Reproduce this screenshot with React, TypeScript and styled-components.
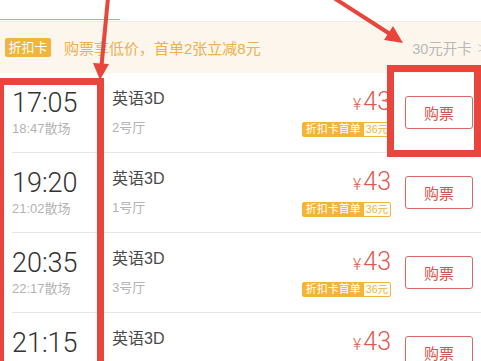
import React from "react";
import styled, { createGlobalStyle } from "styled-components";

interface Show {
  start: string;
  end: string;
  hall: string;
}

const shows: Show[] = [
  { start: "17:05", end: "18:47", hall: "2号厅" },
  { start: "19:20", end: "21:02", hall: "1号厅" },
  { start: "20:35", end: "22:17", hall: "3号厅" },
  { start: "21:15", end: "22:57", hall: "2号厅" },
];

const RED = "#e8453c";
const LIGHT_FONT = `Roboto, "Liberation Sans", "Noto Sans CJK SC", sans-serif`;

const App: React.FC = () => {
  return (
    <>
      <GlobalStyle />
      <StyledPage>
        <StyledTabBar>
          <StyledTabLine />
        </StyledTabBar>
        <StyledBanner>
          <StyledBannerLeft>
            <StyledCardTag>折扣卡</StyledCardTag>
            <StyledBannerText>购票享低价，首单2张立减8元</StyledBannerText>
          </StyledBannerLeft>
          <StyledOpenCard>
            30元开卡<StyledChevron>&gt;</StyledChevron>
          </StyledOpenCard>
        </StyledBanner>
        <StyledList>
          {shows.map((show) => (
            <StyledRow key={show.start}>
              <StyledTimeCol>
                <StyledStart>{show.start}</StyledStart>
                <StyledEnd>{show.end}散场</StyledEnd>
              </StyledTimeCol>
              <StyledInfo>
                <StyledTitle>英语3D</StyledTitle>
                <StyledHall>{show.hall}</StyledHall>
              </StyledInfo>
              <StyledPriceCol>
                <StyledPrice>
                  <StyledYen>¥</StyledYen>43
                </StyledPrice>
                <StyledDeal>
                  <StyledDealLabel>折扣卡首单</StyledDealLabel>
                  <StyledDealPrice>36元</StyledDealPrice>
                </StyledDeal>
              </StyledPriceCol>
              <StyledBuyButton>购票</StyledBuyButton>
            </StyledRow>
          ))}
        </StyledList>

        {/* annotation marks drawn over the screenshot */}
        <StyledMarkBox $left={-3} $top={78} $width={107} $height={300} />
        <StyledMarkBox $left={387} $top={65} $width={94} $height={92} />
        <StyledArrows width="481" height="361" viewBox="0 0 481 361">
          <line x1="108" y1="-2" x2="101.5" y2="66" stroke={RED} strokeWidth="4" />
          <polygon points="100,80 93,63 109,64" fill={RED} />
          <line x1="334" y1="-2" x2="390" y2="34" stroke={RED} strokeWidth="4" />
          <polygon points="403,43 384,40 393,26" fill={RED} />
        </StyledArrows>
      </StyledPage>
    </>
  );
};

export default App;

const GlobalStyle = createGlobalStyle`
  body {
    margin: 0;
    background: #ffffff;
    font-family: "Liberation Sans", "Noto Sans CJK SC", sans-serif;
    overflow: hidden;
  }
`;

const StyledPage = styled.div`
  position: relative;
  width: 481px;
  height: 361px;
  overflow: hidden;
  background: #ffffff;
`;

const StyledTabBar = styled.div`
  height: 21px;
  display: flex;
  align-items: flex-end;
  padding-bottom: 1px;
  box-sizing: border-box;
`;

const StyledTabLine = styled.div`
  width: 120px;
  height: 1.5px;
  background: #dd9a96;
`;

const StyledBanner = styled.div`
  height: 52px;
  box-sizing: border-box;
  border-top: 1px solid #f3ebe2;
  background: #fdf6ed;
  display: flex;
  align-items: center;
  justify-content: space-between;
  padding-left: 5px;
`;

const StyledBannerLeft = styled.div`
  display: flex;
  align-items: center;
  gap: 13px;
`;

const StyledCardTag = styled.span`
  width: 46px;
  height: 19px;
  border-radius: 2px;
  background: #f1b43d;
  color: #ffffff;
  font-size: 13px;
  line-height: 19px;
  text-align: center;
`;

const StyledBannerText = styled.span`
  color: #ecb04f;
  font-size: 15px;
`;

const StyledOpenCard = styled.span`
  display: flex;
  align-items: center;
  gap: 6px;
  margin-right: -5px;
  color: #b8b8b8;
  font-size: 14.5px;
`;

const StyledChevron = styled.span`
  color: #cfcfcf;
  font-size: 14px;
`;

const StyledList = styled.div`
  display: flex;
  flex-direction: column;
`;

const StyledRow = styled.div`
  height: 80px;
  box-sizing: border-box;
  margin-left: 12px;
  border-bottom: 1px solid #e6e6e6;
  display: flex;
  align-items: center;
  padding-right: 8px;
`;

const StyledTimeCol = styled.div`
  width: 100px;
  display: flex;
  flex-direction: column;
`;

const StyledStart = styled.div`
  font-family: ${LIGHT_FONT};
  font-weight: 300;
  font-size: 27px;
  line-height: 30px;
  color: #333333;
  margin-bottom: 3px;
`;

const StyledEnd = styled.div`
  font-size: 13px;
  line-height: 16px;
  color: #b3b3b3;
`;

const StyledInfo = styled.div`
  flex: 1;
  display: flex;
  flex-direction: column;
`;

const StyledTitle = styled.div`
  font-size: 16px;
  line-height: 20px;
  color: #4a4a4a;
  margin-bottom: 11px;
`;

const StyledHall = styled.div`
  font-size: 13px;
  line-height: 16px;
  color: #b3b3b3;
`;

const StyledPriceCol = styled.div`
  display: flex;
  flex-direction: column;
  align-items: flex-end;
  margin-right: 14px;
`;

const StyledPrice = styled.div`
  font-family: ${LIGHT_FONT};
  font-weight: 300;
  font-size: 25px;
  line-height: 28px;
  color: #e2594f;
  margin-bottom: 3px;
`;

const StyledYen = styled.span`
  font-size: 16px;
  margin-right: 2px;
`;

const StyledDeal = styled.div`
  display: flex;
  height: 15px;
  border-radius: 2px;
  overflow: hidden;
  background: #f1b43d;
  border: 1px solid #f1b43d;
  box-sizing: border-box;
  font-size: 11px;
  line-height: 13px;
`;

const StyledDealLabel = styled.span`
  color: #ffffff;
  padding: 0 3px;
`;

const StyledDealPrice = styled.span`
  color: #ecb64a;
  background: #fffdf2;
  padding: 0 2px;
  font-size: 10.5px;
`;

const StyledBuyButton = styled.button`
  width: 68px;
  height: 33px;
  border: 1.5px solid #d66a63;
  border-radius: 3px;
  background: #ffffff;
  color: #d4554e;
  font-family: inherit;
  font-size: 15px;
  padding: 0;
`;

const StyledMarkBox = styled.div<{
  $left: number;
  $top: number;
  $width: number;
  $height: number;
}>`
  position: absolute;
  left: ${(p) => p.$left}px;
  top: ${(p) => p.$top}px;
  width: ${(p) => p.$width}px;
  height: ${(p) => p.$height}px;
  box-sizing: border-box;
  border: 7px solid ${RED};
`;

const StyledArrows = styled.svg`
  position: absolute;
  left: 0;
  top: 0;
  pointer-events: none;
`;
